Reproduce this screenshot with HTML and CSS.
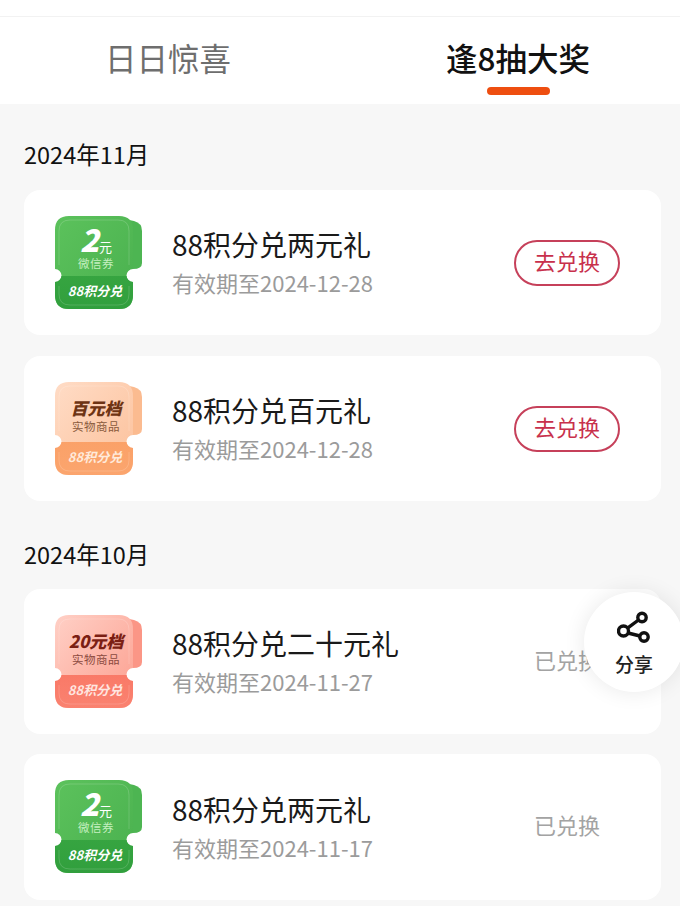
FILE: index.html
```html
<!DOCTYPE html>
<html>
<head>
<meta charset="utf-8" />
<title>逢8抽大奖</title>
<link rel="stylesheet" href="styles.css">
</head>
<body>
<svg class="defs" width="0" height="0">
	<defs>
		<linearGradient id="green-top" x1="0" y1="0" x2="1" y2="1"><stop offset="0" stop-color="#5cc25c"/><stop offset="1" stop-color="#49b04e"/></linearGradient>
		<linearGradient id="green-stub" x1="0" y1="0" x2="0" y2="1"><stop offset="0" stop-color="#3fae47"/><stop offset="1" stop-color="#319f3d"/></linearGradient>
		<linearGradient id="peach-top" x1="0" y1="0" x2="1" y2="1"><stop offset="0" stop-color="#ffdcc6"/><stop offset="1" stop-color="#fcc09a"/></linearGradient>
		<linearGradient id="peach-stub" x1="0" y1="0" x2="0" y2="1"><stop offset="0" stop-color="#fa9a5e"/><stop offset="1" stop-color="#fba56e"/></linearGradient>
		<linearGradient id="red-top" x1="0" y1="0" x2="1" y2="1"><stop offset="0" stop-color="#ffd0c6"/><stop offset="1" stop-color="#fc9e8e"/></linearGradient>
		<linearGradient id="red-stub" x1="0" y1="0" x2="0" y2="1"><stop offset="0" stop-color="#f86a58"/><stop offset="1" stop-color="#fa8270"/></linearGradient>
		<clipPath id="stub-clip"><rect x="0" y="61" width="88" height="36"/></clipPath>
		<path id="t-back" d="M60 2 L79 6 Q87 8 87 16 V48 Q87 54 78 54 H70 Z"/>
		<path id="t-main" d="M14 1 H64 Q78 1 78 15 V54 A6.5 6.5 0 0 0 78 67 V80 Q78 94 64 94 H14 Q0 94 0 80 V67 A6.5 6.5 0 0 0 0 54 V15 Q0 1 14 1 Z"/>
		<path id="t-line" d="M4 50 V16 Q4 5 15 5 H63 Q74 5 74 16 V50 M4 71 V79 Q4 90 15 90 H63 Q74 90 74 79 V71"/>
	</defs>
</svg>

<div class="page">
	<header class="top">
		<div class="status"></div>
		<nav class="tabs">
			<div class="tab">日日惊喜</div>
			<div class="tab active">逢8抽大奖</div>
		</nav>
	</header>

	<main class="list">
		<h3 class="month">2024年11月</h3>
		<section class="card">
			<svg class="ticket green" viewBox="0 0 88 96">
				<use href="#t-back" class="back"/><use href="#t-main" class="main"/><use href="#t-main" class="stub" clip-path="url(#stub-clip)"/><use href="#t-line" class="line"/>
				<text x="25" y="37" class="big">2</text><text x="44" y="37" class="unit">元</text>
				<text x="41" y="53" class="sub">微信券</text>
				<text x="40" y="81" class="pts">88积分兑</text>
			</svg>
			<div class="info">
				<div class="name">88积分兑两元礼</div>
				<div class="date">有效期至2024-12-28</div>
			</div>
			<a class="btn">去兑换</a>
		</section>
		<section class="card">
			<svg class="ticket peach" viewBox="0 0 88 96">
				<use href="#t-back" class="back"/><use href="#t-main" class="main"/><use href="#t-main" class="stub" clip-path="url(#stub-clip)"/><use href="#t-line" class="line"/>
				<text x="41" y="34" class="grade">百元档</text>
				<text x="41" y="50" class="sub">实物商品</text>
				<text x="40" y="81" class="pts">88积分兑</text>
			</svg>
			<div class="info">
				<div class="name">88积分兑百元礼</div>
				<div class="date">有效期至2024-12-28</div>
			</div>
			<a class="btn">去兑换</a>
		</section>

		<h3 class="month second">2024年10月</h3>
		<section class="card">
			<svg class="ticket red" viewBox="0 0 88 96">
				<use href="#t-back" class="back"/><use href="#t-main" class="main"/><use href="#t-main" class="stub" clip-path="url(#stub-clip)"/><use href="#t-line" class="line"/>
				<text x="41" y="34" class="grade">20元档</text>
				<text x="41" y="50" class="sub">实物商品</text>
				<text x="40" y="81" class="pts">88积分兑</text>
			</svg>
			<div class="info">
				<div class="name">88积分兑二十元礼</div>
				<div class="date">有效期至2024-11-27</div>
			</div>
			<a class="btn done">已兑换</a>
		</section>
		<section class="card">
			<svg class="ticket green" viewBox="0 0 88 96">
				<use href="#t-back" class="back"/><use href="#t-main" class="main"/><use href="#t-main" class="stub" clip-path="url(#stub-clip)"/><use href="#t-line" class="line"/>
				<text x="25" y="37" class="big">2</text><text x="44" y="37" class="unit">元</text>
				<text x="41" y="53" class="sub">微信券</text>
				<text x="40" y="81" class="pts">88积分兑</text>
			</svg>
			<div class="info">
				<div class="name">88积分兑两元礼</div>
				<div class="date">有效期至2024-11-17</div>
			</div>
			<a class="btn done">已兑换</a>
		</section>
	</main>

	<div class="share">
		<svg class="share-icon" viewBox="0 0 36 36">
			<circle cx="25" cy="6.5" r="4.2"/>
			<circle cx="6.5" cy="20" r="5"/>
			<circle cx="27" cy="26" r="4.2"/>
			<path d="M21.5 9 L10.5 17.2 M11 22 L23 25"/>
		</svg>
		<div class="share-text">分享</div>
	</div>
</div>
</body>
</html>
```

FILE: styles.css
```css
html, body {
	margin: 0;
	padding: 0;
}
body {
	font-family: "Noto Sans CJK SC", "Noto Sans", sans-serif;
	background-color: #f7f7f7;
}
.defs {
	position: absolute;
}
.page {
	position: relative;
	width: 680px;
	height: 906px;
	overflow: hidden;
}

/* header */
.top {
	background-color: #fff;
}
.status {
	height: 16px;
	border-bottom: 1px solid #f2f2f2;
}
.tabs {
	display: flex;
	justify-content: space-between;
	height: 87px;
	padding: 0 90px 0 105px;
}
.tab {
	position: relative;
	font-size: 31.5px;
	line-height: 80px;
	color: #6e6e6e;
}
.tab.active {
	color: #111;
	font-weight: 500;
}
.tab.active::after {
	content: "";
	position: absolute;
	left: 41px;
	bottom: 9px;
	width: 63px;
	height: 8px;
	border-radius: 4px;
	background-color: #ee4e10;
}

/* list */
.list {
	padding: 0 19px 0 24px;
}
.month {
	margin: 0;
	height: 86px;
	padding-top: 34px;
	box-sizing: border-box;
	font-size: 23.5px;
	line-height: 32px;
	font-weight: 400;
	color: #111;
}
.month.second {
	height: 88px;
	padding-top: 37px;
}
.card {
	display: flex;
	align-items: center;
	height: 145px;
	margin-bottom: 21px;
	padding: 0 41px 0 31px;
	box-sizing: border-box;
	background-color: #fff;
	border-radius: 16px;
}
.card:nth-of-type(2) {
	margin-bottom: 0;
}
.card:nth-of-type(3) {
	margin-bottom: 20px;
}
.card:nth-of-type(4) {
	height: 146px;
}
.info {
	flex: 1;
	margin-left: 29px;
}
.name {
	font-size: 28px;
	line-height: 39px;
	color: #1a1a1a;
}
.date {
	font-size: 22px;
	line-height: 36px;
	color: #9b9b9b;
}
.btn {
	width: 106px;
	height: 46px;
	box-sizing: border-box;
	border: 2px solid #c6405a;
	border-radius: 23px;
	font-size: 22px;
	line-height: 37px;
	text-align: center;
	color: #c8304c;
}
.btn.done {
	border-color: transparent;
	color: #a3a3a3;
}

/* ticket icons */
.ticket {
	flex: none;
	width: 88px;
	height: 96px;
}
.ticket text {
	text-anchor: middle;
}
.ticket .line {
	fill: none;
	stroke: rgba(255, 255, 255, .16);
	stroke-width: 1;
}
.ticket .big {
	font-size: 31px;
	font-weight: 900;
	font-style: italic;
	fill: #fff;
	text-anchor: start;
}
.ticket .unit {
	font-size: 13px;
	fill: #fff;
	text-anchor: start;
}
.ticket .sub {
	font-size: 11.5px;
	letter-spacing: .5px;
}
.ticket .grade {
	font-size: 17px;
	font-weight: 900;
	font-style: italic;
}
.ticket .pts {
	font-size: 13px;
	font-weight: 700;
	font-style: italic;
	fill: #fff;
}
.green .back { fill: #4db552; }
.green .main { fill: url(#green-top); }
.green .stub { fill: url(#green-stub); }
.green .sub { fill: #c5efc0; }
.peach .back { fill: #fbbb90; }
.peach .main { fill: url(#peach-top); }
.peach .stub { fill: url(#peach-stub); }
.peach .sub { fill: #8a5a3c; }
.peach .grade { fill: #6e3414; }
.peach .pts { fill: #ffeadb; }
.red .back { fill: #fb9686; }
.red .main { fill: url(#red-top); }
.red .stub { fill: url(#red-stub); }
.red .sub { fill: #8c4a40; }
.red .grade { fill: #7c1f14; }
.red .pts { fill: #ffe6e0; }

/* share button floats over the cards */
.share {
	position: absolute;
	left: 584px;
	top: 592px;
	width: 100px;
	height: 100px;
	border-radius: 50%;
	background-color: #fff;
	box-shadow: 0 0 22px rgba(0, 0, 0, .09);
	text-align: center;
}
.share-icon {
	display: block;
	width: 36px;
	height: 36px;
	margin: 19px 0 0 33px;
	fill: none;
	stroke: #111;
	stroke-width: 3.4;
}
.share-text {
	margin: 4px 0 0 0;
	font-size: 19px;
	line-height: 26px;
	font-weight: 500;
	color: #222;
}
```
